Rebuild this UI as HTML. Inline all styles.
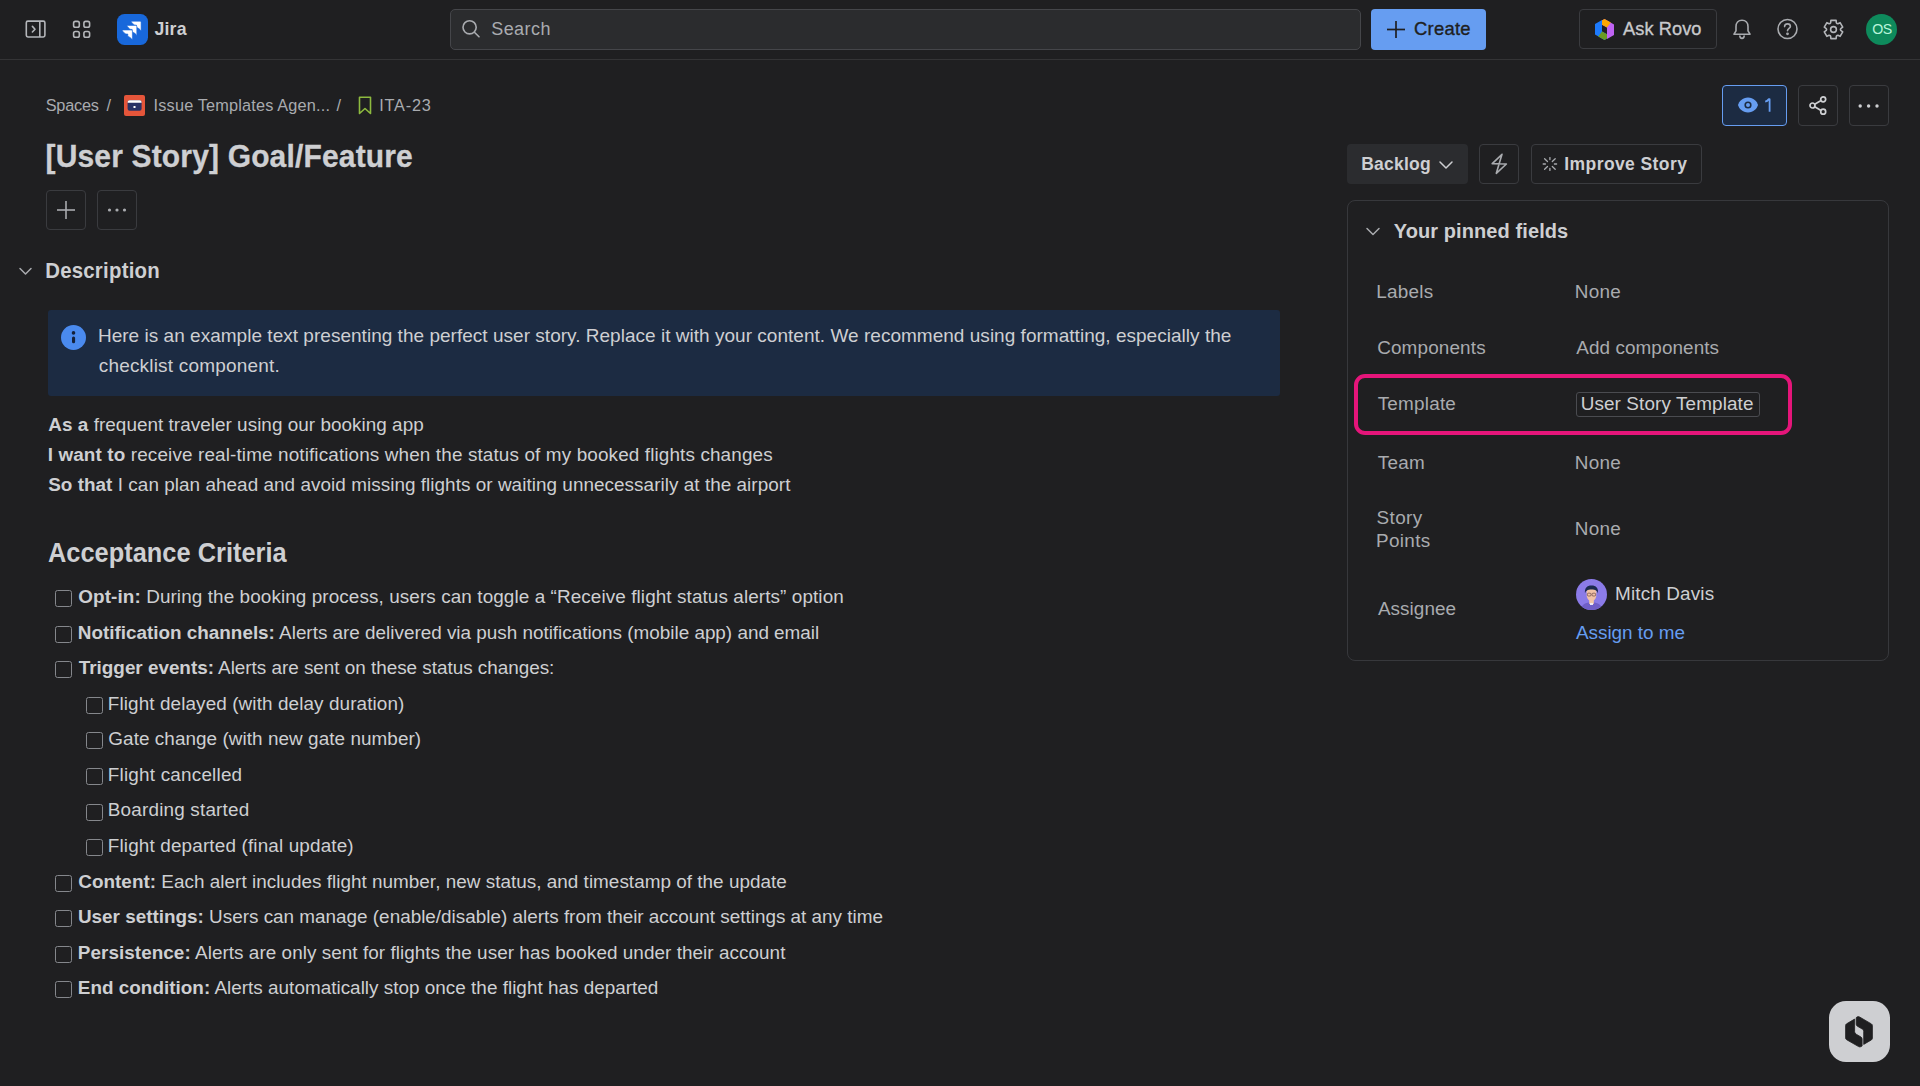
<!DOCTYPE html>
<html><head><meta charset="utf-8"><title>Jira</title>
<style>
html,body{margin:0;padding:0;}
body{width:1920px;height:1086px;background:#1F1F21;position:relative;overflow:hidden;font-family:"Liberation Sans",sans-serif;}
.t{position:absolute;white-space:pre;}
.t b{font-weight:700;}
.btn{position:absolute;border:1px solid #3a3b3f;border-radius:4px;}
.cb{position:absolute;width:15px;height:15px;border:1px solid #85878c;border-radius:2.5px;}
</style></head><body>
<div style="position:absolute;left:0;top:59px;width:1920px;height:1px;background:#343436"></div><svg style="position:absolute;left:24px;top:18px" width="24" height="22" viewBox="0 0 24 22" fill="none" stroke="#B4B6BA" stroke-width="1.6">
<rect x="2.3" y="3.1" width="18.6" height="15.85" rx="1.6"/><line x1="15.8" y1="3.1" x2="15.8" y2="19"/><polyline points="8.4,8.4 11,11.2 8.4,14" stroke-linecap="round" stroke-linejoin="round"/></svg><svg style="position:absolute;left:71.5px;top:19.5px" width="22" height="22" viewBox="0 0 22 22" fill="none" stroke="#B4B6BA" stroke-width="1.6">
<rect x="1.6" y="1.4" width="5.7" height="5.8" rx="1.8"/><rect x="11.9" y="1.4" width="5.7" height="5.8" rx="1.8"/>
<rect x="1.6" y="11.5" width="5.7" height="5.8" rx="1.8"/><rect x="11.9" y="11.5" width="5.7" height="5.8" rx="1.8"/></svg><div style="position:absolute;left:117px;top:14px;width:30.5px;height:30.5px;border-radius:7.5px;background:#1868DB"></div>
<svg style="position:absolute;left:117px;top:14px" width="31" height="31" viewBox="0 0 31 31" fill="#FFFFFF" stroke="#1868DB" stroke-width="0.6">
<path d="M14.0 7.2 H23.1 Q24.1 7.2 24.1 8.2 V16.9 C23.1 15.499999999999998 21.5 14.099999999999998 19.5 13.299999999999999 V11.2 H18.0 C16.6 10.799999999999999 15.2 9.2 14.0 7.2 Z"/><path d="M9.8 11.4 H18.8 Q19.8 11.4 19.8 12.4 V21.4 C18.8 20.0 17.2 18.599999999999998 15.200000000000001 17.799999999999997 V15.4 H13.8 C12.4 15.0 11.0 13.4 9.8 11.4 Z"/><path d="M5.0 16.0 H14.4 Q15.4 16.0 15.4 17.0 V25.8 C14.4 24.400000000000002 12.8 23.0 10.8 22.2 V20.0 H9.0 C7.6 19.6 6.2 18.0 5.0 16.0 Z"/></svg><div id="te24573bc" class="t " style="left:154.50px;top:18.37px;font-size:17.7px;line-height:23px;color:#CECFD2;font-weight:700;letter-spacing:0.183px;">Jira</div>
<div style="position:absolute;left:450px;top:9px;width:909px;height:39px;border:1px solid #45464a;border-radius:5px;background:#2b2c2e"></div><svg style="position:absolute;left:461px;top:19px" width="20" height="20" viewBox="0 0 20 20" fill="none" stroke="#A9ABAF" stroke-width="1.6" stroke-linecap="round">
<circle cx="8.6" cy="8.3" r="6.6"/><line x1="13.4" y1="13.2" x2="18" y2="17.8"/></svg><div id="t9af25e03" class="t " style="left:491.19px;top:17.86px;font-size:18px;line-height:23px;color:#A9ABAF;font-weight:400;letter-spacing:0.451px;">Search</div>
<div style="position:absolute;left:1371px;top:9px;width:115px;height:41px;border-radius:4px;background:#669DF1"></div><svg style="position:absolute;left:1386px;top:20px" width="20" height="19" viewBox="0 0 20 19" stroke="#1F1F21" stroke-width="1.7">
<line x1="10" y1="1" x2="10" y2="18"/><line x1="1" y1="9.5" x2="19" y2="9.5"/></svg><div id="tb88b6cc4" class="t " style="left:1414.06px;top:17.32px;font-size:18.4px;line-height:24px;color:#1F1F21;font-weight:400;letter-spacing:0.268px;-webkit-text-stroke:0.35px #1F1F21;">Create</div>
<div style="position:absolute;left:1579px;top:9px;width:136px;height:38px;border:1px solid #3a3b3f;border-radius:4px"></div><svg style="position:absolute;left:1594px;top:18px" width="21" height="23" viewBox="0 0 21 23">
<path d="M8 2.5 L10.5 1 L20 6.5 L20 17 L13 21 L13 9.5 L8 6.8 Z" fill="#BF63F3"/>
<path d="M8 2.5 L10.5 1 L16.8 4.6 L13 9.5 L8 6.8 Z" fill="#FCA700"/>
<path d="M13 20.5 L10.5 22 L1 16.5 L1 6 L8 2 L8 13.5 L13 16.2 Z" fill="#1D7AFC"/>
<path d="M13 20.5 L10.5 22 L4.2 18.4 L8 13.5 L13 16.2 Z" fill="#6A9A23"/>
</svg><div id="t4bbac094" class="t " style="left:1623.05px;top:17.19px;font-size:18.2px;line-height:24px;color:#C8C9CC;font-weight:400;letter-spacing:0.087px;-webkit-text-stroke:0.35px #C8C9CC;">Ask Rovo</div>
<svg style="position:absolute;left:1731px;top:18px" width="22" height="22" viewBox="0 0 22 22" fill="none" stroke="#A9ABAF" stroke-width="1.6" stroke-linejoin="round">
<path d="M11 2.2 C7.2 2.2 5 5 5 8.5 L5 12.8 L3 16.2 L19 16.2 L17 12.8 L17 8.5 C17 5 14.8 2.2 11 2.2 Z"/><path d="M8.8 17.6 C8.8 19.4 9.9 20.4 11 20.4 C12.1 20.4 13.2 19.4 13.2 17.6"/></svg><svg style="position:absolute;left:1776px;top:18px" width="23" height="22" viewBox="0 0 23 22" fill="none" stroke="#A9ABAF" stroke-width="1.6" stroke-linecap="round">
<circle cx="11.5" cy="11" r="9.5"/><path d="M8.6 8.6 C8.6 6.9 9.9 5.9 11.5 5.9 C13.1 5.9 14.4 6.9 14.4 8.5 C14.4 10.4 11.5 10.6 11.5 12.8"/><circle cx="11.5" cy="15.8" r="0.6" fill="#A9ABAF"/></svg><svg style="position:absolute;left:1823px;top:18.5px" width="21" height="21" viewBox="0 0 21 21" fill="none" stroke="#B4B6BA" stroke-width="1.6" stroke-linejoin="round">
<path d="M13.95 4.52 L13.35 3.78 L13.12 1.37 L7.88 1.37 L7.65 3.78 L7.05 4.52 L6.11 4.67 L3.90 3.67 L1.28 8.20 L3.25 9.61 L3.60 10.50 L3.25 11.39 L1.28 12.80 L3.90 17.33 L6.11 16.33 L7.05 16.48 L7.65 17.22 L7.88 19.63 L13.12 19.63 L13.35 17.22 L13.95 16.48 L14.89 16.33 L17.10 17.33 L19.72 12.80 L17.75 11.39 L17.40 10.50 L17.75 9.61 L19.72 8.20 L17.10 3.67 L14.89 4.67 Z"/><circle cx="10.5" cy="10.5" r="2.9"/></svg><div style="position:absolute;left:1866px;top:14px;width:31px;height:31px;border-radius:50%;background:#0E8A5C"></div><div id="t4dd1d738" class="t " style="left:1872.30px;top:20.38px;font-size:14.2px;line-height:18px;color:#B8F5DA;font-weight:400;letter-spacing:-0.6px">OS</div>
<div id="tec1915bc" class="t " style="left:45.71px;top:94.85px;font-size:16.3px;line-height:21px;color:#A9ABAF;font-weight:400;letter-spacing:-0.209px;">Spaces</div>
<div id="t912fa331" class="t " style="left:106.50px;top:94.85px;font-size:16.3px;line-height:21px;color:#A9ABAF;font-weight:400;">/</div>
<svg style="position:absolute;left:124px;top:95px" width="21" height="21" viewBox="0 0 21 21">
<rect width="21" height="21" rx="2" fill="#E5553A"/><rect x="3.6" y="5.2" width="14" height="10.6" rx="2" fill="#283266"/><path d="M5.6 5.2 H15.6 Q17.6 5.2 17.6 7.2 V7.8 H3.6 V7.2 Q3.6 5.2 5.6 5.2 Z" fill="#FFFFFF"/><rect x="9.5" y="11" width="2" height="2" fill="#FFFFFF"/></svg><div id="t836f1002" class="t " style="left:153.59px;top:94.85px;font-size:16.3px;line-height:21px;color:#A9ABAF;font-weight:400;letter-spacing:0.172px;">Issue Templates Agen...</div>
<div id="tc5fc73de" class="t " style="left:336.50px;top:94.85px;font-size:16.3px;line-height:21px;color:#A9ABAF;font-weight:400;">/</div>
<svg style="position:absolute;left:358px;top:96px" width="14" height="19" viewBox="0 0 14 19" fill="none" stroke="#8DBA3F" stroke-width="1.6" stroke-linejoin="round">
<path d="M1.5 1.2 L12.5 1.2 L12.5 17.5 L7 12.5 L1.5 17.5 Z"/></svg><div id="t2da21044" class="t " style="left:379.23px;top:94.85px;font-size:16.3px;line-height:21px;color:#A9ABAF;font-weight:400;letter-spacing:0.806px;">ITA-23</div>
<div id="t11ab9a29" class="t " style="left:45.53px;top:137.41px;font-size:30px;line-height:39px;color:#CECFD2;font-weight:700;letter-spacing:0.160px;transform:scaleY(1.06);transform-origin:0 29.89px;-webkit-text-stroke:0.3px #CECFD2;">[User Story] Goal/Feature</div>
<div class="btn" style="left:46px;top:190px;width:38px;height:38px"></div><svg style="position:absolute;left:55px;top:199px" width="22" height="22" viewBox="0 0 22 22" stroke="#A9ABAF" stroke-width="1.6">
<line x1="11" y1="2" x2="11" y2="20"/><line x1="2" y1="11" x2="20" y2="11"/></svg><div class="btn" style="left:97px;top:190px;width:38px;height:38px"></div><svg style="position:absolute;left:104px;top:203px" width="26" height="14" viewBox="0 0 26 14" fill="#A9ABAF">
<circle cx="5.5" cy="7" r="1.6"/><circle cx="13" cy="7" r="1.6"/><circle cx="20.5" cy="7" r="1.6"/></svg><svg style="position:absolute;left:18px;top:265px" width="15" height="12" viewBox="0 0 15 12" fill="none" stroke="#A9ABAF" stroke-width="1.5" stroke-linecap="round" stroke-linejoin="round">
<polyline points="2,3.5 7.5,9 13,3.5"/></svg><div id="t89520562" class="t " style="left:45.18px;top:257.73px;font-size:20.4px;line-height:27px;color:#CECFD2;font-weight:700;letter-spacing:0.236px;transform:scaleY(1.04);transform-origin:0 20.57px;">Description</div>
<div style="position:absolute;left:48px;top:309.5px;width:1232px;height:86px;background:#1C2B42;border-radius:3px"></div><svg style="position:absolute;left:61px;top:325px" width="25" height="25" viewBox="0 0 25 25">
<circle cx="12.5" cy="12.5" r="12.5" fill="#4A8AEE"/><circle cx="12.5" cy="7.9" r="1.8" fill="#14213A"/><rect x="11" y="11.6" width="3.1" height="6.6" rx="1.5" fill="#14213A"/></svg><div id="tb678e490" class="t " style="left:97.95px;top:320.72px;font-size:19.0px;line-height:30px;color:#CECFD2;font-weight:400;letter-spacing:0.023px;">Here is an example text presenting the perfect user story. Replace it with your content. We recommend using formatting, especially the</div>
<div id="t5035860f" class="t " style="left:98.71px;top:350.62px;font-size:19.0px;line-height:30px;color:#CECFD2;font-weight:400;letter-spacing:0.190px;">checklist component.</div>
<div id="tdb010ea7" class="t " style="left:48.36px;top:410.05px;font-size:18.9px;line-height:30px;color:#CECFD2;font-weight:400;letter-spacing:0.034px;"><b>As a</b> frequent traveler using our booking app</div>
<div id="tefd51583" class="t " style="left:47.67px;top:440.25px;font-size:18.9px;line-height:30px;color:#CECFD2;font-weight:400;letter-spacing:0.129px;"><b>I want to</b> receive real-time notifications when the status of my booked flights changes</div>
<div id="t93f1d818" class="t " style="left:48.14px;top:470.45px;font-size:18.9px;line-height:30px;color:#CECFD2;font-weight:400;letter-spacing:0.046px;"><b>So that</b> I can plan ahead and avoid missing flights or waiting unnecessarily at the airport</div>
<div id="tf5256118" class="t " style="left:48.01px;top:536.92px;font-size:25.35px;line-height:33px;color:#CECFD2;font-weight:700;letter-spacing:0.032px;transform:scaleY(1.055);transform-origin:0 25.28px;">Acceptance Criteria</div>
<div class="cb" style="left:55px;top:590.10px"></div><div id="tda56a4c0" class="t " style="left:78.28px;top:582.05px;font-size:18.9px;line-height:30px;color:#CECFD2;font-weight:400;letter-spacing:0.093px;"><b>Opt-in:</b> During the booking process, users can toggle a “Receive flight status alerts” option</div>
<div class="cb" style="left:55px;top:625.67px"></div><div id="t395861fa" class="t " style="left:77.81px;top:617.62px;font-size:18.9px;line-height:30px;color:#CECFD2;font-weight:400;letter-spacing:-0.010px;"><b>Notification channels:</b> Alerts are delivered via push notifications (mobile app) and email</div>
<div class="cb" style="left:55px;top:661.24px"></div><div id="tb706fcbb" class="t " style="left:78.82px;top:653.19px;font-size:18.9px;line-height:30px;color:#CECFD2;font-weight:400;letter-spacing:-0.022px;"><b>Trigger events:</b> Alerts are sent on these status changes:</div>
<div class="cb" style="left:86px;top:696.81px"></div><div id="teb4f2bdb" class="t " style="left:107.82px;top:688.76px;font-size:18.9px;line-height:30px;color:#CECFD2;font-weight:400;letter-spacing:0.102px;">Flight delayed (with delay duration)</div>
<div class="cb" style="left:86px;top:732.38px"></div><div id="tc592b875" class="t " style="left:108.34px;top:724.33px;font-size:18.9px;line-height:30px;color:#CECFD2;font-weight:400;letter-spacing:0.060px;">Gate change (with new gate number)</div>
<div class="cb" style="left:86px;top:767.95px"></div><div id="tbf15dabf" class="t " style="left:107.82px;top:759.90px;font-size:18.9px;line-height:30px;color:#CECFD2;font-weight:400;letter-spacing:0.203px;">Flight cancelled</div>
<div class="cb" style="left:86px;top:803.52px"></div><div id="tf682d5c1" class="t " style="left:107.82px;top:795.47px;font-size:18.9px;line-height:30px;color:#CECFD2;font-weight:400;letter-spacing:0.183px;">Boarding started</div>
<div class="cb" style="left:86px;top:839.09px"></div><div id="t55b3a67a" class="t " style="left:107.82px;top:831.04px;font-size:18.9px;line-height:30px;color:#CECFD2;font-weight:400;letter-spacing:0.148px;">Flight departed (final update)</div>
<div class="cb" style="left:55px;top:874.66px"></div><div id="t1e64060b" class="t " style="left:78.28px;top:866.61px;font-size:18.9px;line-height:30px;color:#CECFD2;font-weight:400;letter-spacing:0.023px;"><b>Content:</b> Each alert includes flight number, new status, and timestamp of the update</div>
<div class="cb" style="left:55px;top:910.23px"></div><div id="ta04a3718" class="t " style="left:77.92px;top:902.18px;font-size:18.9px;line-height:30px;color:#CECFD2;font-weight:400;letter-spacing:-0.003px;"><b>User settings:</b> Users can manage (enable/disable) alerts from their account settings at any time</div>
<div class="cb" style="left:55px;top:945.80px"></div><div id="t80479583" class="t " style="left:77.81px;top:937.75px;font-size:18.9px;line-height:30px;color:#CECFD2;font-weight:400;letter-spacing:0.048px;"><b>Persistence:</b> Alerts are only sent for flights the user has booked under their account</div>
<div class="cb" style="left:55px;top:981.37px"></div><div id="t8da00bed" class="t " style="left:77.81px;top:973.32px;font-size:18.9px;line-height:30px;color:#CECFD2;font-weight:400;letter-spacing:0.015px;"><b>End condition:</b> Alerts automatically stop once the flight has departed</div>
<div style="position:absolute;left:1722px;top:85px;width:63px;height:39px;border:1px solid #669DF1;border-radius:4px;background:#1C2B42"></div><svg style="position:absolute;left:1737px;top:96px" width="22" height="18" viewBox="0 0 22 18">
<path d="M11 1.5 C5.5 1.5 2 5.5 1 9 C2 12.5 5.5 16.5 11 16.5 C16.5 16.5 20 12.5 21 9 C20 5.5 16.5 1.5 11 1.5 Z" fill="#669DF1"/><circle cx="11" cy="9" r="3.6" fill="#1C2B42"/><circle cx="11" cy="9" r="2" fill="#669DF1"/></svg><svg style="position:absolute;left:1763px;top:98px" width="10" height="15" viewBox="0 0 10 15" fill="none" stroke="#669DF1" stroke-width="1.8" stroke-linejoin="round"><path d="M6.6 13.7 L6.6 1.2 L5.6 1.2 C4.8 2.6 3.6 3.4 2.2 3.7"/></svg><div class="btn" style="left:1798px;top:85px;width:38px;height:39px"></div><svg style="position:absolute;left:1808px;top:95px" width="20" height="21" viewBox="0 0 20 21" fill="none" stroke="#CECFD2" stroke-width="1.7">
<circle cx="15.2" cy="4.3" r="2.5"/><circle cx="4.5" cy="10.5" r="2.5"/><circle cx="15.2" cy="16.7" r="2.5"/><line x1="6.7" y1="9.2" x2="13" y2="5.6"/><line x1="6.7" y1="11.8" x2="13" y2="15.4"/></svg><div class="btn" style="left:1849px;top:85px;width:38px;height:39px"></div><svg style="position:absolute;left:1855px;top:99px" width="28" height="14" viewBox="0 0 28 14" fill="#CECFD2">
<circle cx="5.2" cy="7" r="1.7"/><circle cx="13.6" cy="7" r="1.7"/><circle cx="22" cy="7" r="1.7"/></svg><div style="position:absolute;left:1347px;top:144px;width:121px;height:40px;border-radius:4px;background:#2B2C2F"></div><div id="tc1f57810" class="t " style="left:1361.27px;top:152.84px;font-size:17.5px;line-height:23px;color:#CECFD2;font-weight:700;letter-spacing:0.215px;">Backlog</div>
<svg style="position:absolute;left:1438px;top:159px" width="16" height="12" viewBox="0 0 16 12" fill="none" stroke="#CECFD2" stroke-width="1.5" stroke-linecap="round" stroke-linejoin="round">
<polyline points="2,3 8,9 14,3"/></svg><div class="btn" style="left:1479px;top:144px;width:38px;height:38px"></div><svg style="position:absolute;left:1489px;top:152px" width="20" height="24" viewBox="0 0 20 24" fill="none" stroke="#A9ABAF" stroke-width="1.6" stroke-linejoin="round">
<path d="M13 2.3 L3.2 11.6 L17.4 12 L7.3 21.3 Z"/></svg><div class="btn" style="left:1530.5px;top:144px;width:169px;height:38px"></div><svg style="position:absolute;left:1541px;top:155px" width="18" height="18" viewBox="0 0 18 18" stroke="#A9ABAF" stroke-width="1.3" stroke-linecap="round">
<line x1="8.9" y1="2.6" x2="8.9" y2="4.6"/><line x1="8.9" y1="13.4" x2="8.9" y2="15.4"/><line x1="2.2" y1="9" x2="4.4" y2="9"/><line x1="13.4" y1="9" x2="15.6" y2="9"/>
<line x1="3.6" y1="3.8" x2="6.5" y2="6.5"/><line x1="11.3" y1="11.5" x2="14.2" y2="14.2"/><line x1="14.2" y1="3.8" x2="11.3" y2="6.5"/><line x1="6.5" y1="11.5" x2="3.6" y2="14.2"/></svg><div id="t503ad083" class="t " style="left:1564.34px;top:152.84px;font-size:17.5px;line-height:23px;color:#CECFD2;font-weight:700;letter-spacing:0.408px;">Improve Story</div>
<div style="position:absolute;left:1347px;top:199.5px;width:540px;height:459px;border:1px solid #37383c;border-radius:8px"></div><svg style="position:absolute;left:1365px;top:225px" width="16" height="13" viewBox="0 0 16 13" fill="none" stroke="#A9ABAF" stroke-width="1.5" stroke-linecap="round" stroke-linejoin="round">
<polyline points="2,3.5 8,9.5 14,3.5"/></svg><div id="taa93298a" class="t " style="left:1393.71px;top:218.37px;font-size:20px;line-height:26px;color:#CECFD2;font-weight:700;letter-spacing:0.091px;">Your pinned fields</div>
<div id="t032ac615" class="t " style="left:1376.27px;top:278.85px;font-size:18.9px;line-height:25px;color:#A9ABAF;font-weight:400;letter-spacing:0.260px;">Labels</div>
<div id="tade270db" class="t " style="left:1574.87px;top:278.85px;font-size:18.9px;line-height:25px;color:#A9ABAF;font-weight:400;letter-spacing:0.286px;">None</div>
<div id="te21ce995" class="t " style="left:1377.17px;top:335.35px;font-size:18.9px;line-height:25px;color:#A9ABAF;font-weight:400;letter-spacing:0.148px;">Components</div>
<div id="t9193ba3e" class="t " style="left:1576.23px;top:335.35px;font-size:18.9px;line-height:25px;color:#A9ABAF;font-weight:400;letter-spacing:0.079px;">Add components</div>
<div id="t01f4a70d" class="t " style="left:1377.69px;top:449.55px;font-size:18.9px;line-height:25px;color:#A9ABAF;font-weight:400;letter-spacing:0.293px;">Team</div>
<div id="td6a2059c" class="t " style="left:1574.87px;top:449.55px;font-size:18.9px;line-height:25px;color:#A9ABAF;font-weight:400;letter-spacing:0.286px;">None</div>
<div id="t28de6e92" class="t " style="left:1377.69px;top:391.35px;font-size:18.9px;line-height:25px;color:#A9ABAF;font-weight:400;letter-spacing:0.216px;">Template</div>
<div style="position:absolute;left:1576px;top:391.5px;width:182px;height:23px;border:1px solid #4a4b50;border-radius:3px"></div><div id="t3b87fd5f" class="t " style="left:1580.66px;top:391.35px;font-size:18.9px;line-height:25px;color:#CECFD2;font-weight:400;letter-spacing:0.114px;">User Story Template</div>
<div style="position:absolute;left:1354px;top:374px;width:429.5px;height:52.6px;border:4px solid #E5157A;border-radius:11px"></div><div id="t7da6f667" class="t " style="left:1376.48px;top:504.55px;font-size:18.9px;line-height:25px;color:#A9ABAF;font-weight:400;letter-spacing:0.431px;">Story</div>
<div id="t04c01537" class="t " style="left:1376.00px;top:527.95px;font-size:18.9px;line-height:25px;color:#A9ABAF;font-weight:400;letter-spacing:0.338px;">Points</div>
<div id="ta49fd8e7" class="t " style="left:1574.87px;top:516.25px;font-size:18.9px;line-height:25px;color:#A9ABAF;font-weight:400;letter-spacing:0.286px;">None</div>
<div id="tda755e62" class="t " style="left:1377.88px;top:595.65px;font-size:18.9px;line-height:25px;color:#A9ABAF;font-weight:400;letter-spacing:0.074px;">Assignee</div>
<svg style="position:absolute;left:1576px;top:579px" width="31" height="31" viewBox="0 0 31 31">
<defs><clipPath id="av"><circle cx="15.5" cy="15.5" r="15.5"/></clipPath></defs>
<g clip-path="url(#av)"><rect width="31" height="31" fill="#8B7BE8"/>
<path d="M5 31 C5.5 25 9.5 23.5 15.5 23.5 C21.5 23.5 25.5 25 26 31 Z" fill="#6F5FC8"/>
<rect x="13.2" y="20" width="4.6" height="5" fill="#F2C7A6"/><rect x="14" y="24" width="3" height="2" fill="#EDE8F5"/>
<path d="M10.6 13 C10.6 9.5 12.6 8.5 15.5 8.5 C18.4 8.5 20.4 9.5 20.4 13 L20.2 17.5 C19.6 20.5 17.6 22 15.5 22 C13.4 22 11.4 20.5 10.8 17.5 Z" fill="#F2C2A6"/>
<path d="M9 14.5 C8.4 9 11 6.5 15.5 6.5 C20 6.5 22.6 9 22 14.5 C21.2 11.5 19.5 10.5 15.5 10.5 C11.5 10.5 9.8 11.5 9 14.5 Z" fill="#1B2A4E"/>
<rect x="11.4" y="14.2" width="3.6" height="2.8" rx="1" fill="none" stroke="#6A4848" stroke-width="0.7"/><rect x="16" y="14.2" width="3.6" height="2.8" rx="1" fill="none" stroke="#6A4848" stroke-width="0.7"/>
</g></svg><div id="tfec02446" class="t " style="left:1615.09px;top:581.45px;font-size:18.9px;line-height:25px;color:#CECFD2;font-weight:400;letter-spacing:0.145px;">Mitch Davis</div>
<div id="t496d3758" class="t " style="left:1575.98px;top:619.55px;font-size:18.9px;line-height:25px;color:#669DF1;font-weight:400;letter-spacing:-0.021px;">Assign to me</div>
<div style="position:absolute;left:1828.5px;top:1001px;width:61px;height:61px;border-radius:17px;background:#CECFD2"></div><svg style="position:absolute;left:1840px;top:1012px" width="40" height="40" viewBox="0 0 40 40" fill="#1F1F21" stroke="#1F1F21" stroke-width="0.8" stroke-linejoin="round">
<path d="M14.6 7.1 L6.6 11.8 Q5.6 12.4 5.6 13.6 L5.6 25.9 Q5.6 27.1 6.6 27.7 L18.6 34.6 Q19.9 35.3 21.1 34.6 L22.1 34 L22.1 27 Q22.1 25.7 21 25 L16.2 22.2 Q14.6 21.3 14.6 19.6 Z"/>
<path d="M16.2 5.9 L16.2 12.2 Q16.2 13.5 17.4 14.2 L22.3 17.1 Q23.7 17.9 23.7 19.5 L23.7 32.4 L31.4 27.9 Q32.4 27.3 32.4 26.1 L32.4 13.7 Q32.4 12.5 31.4 11.9 L19.6 5 Q18.2 4.2 16.8 5.1 Z"/>
</svg>
</body></html>
